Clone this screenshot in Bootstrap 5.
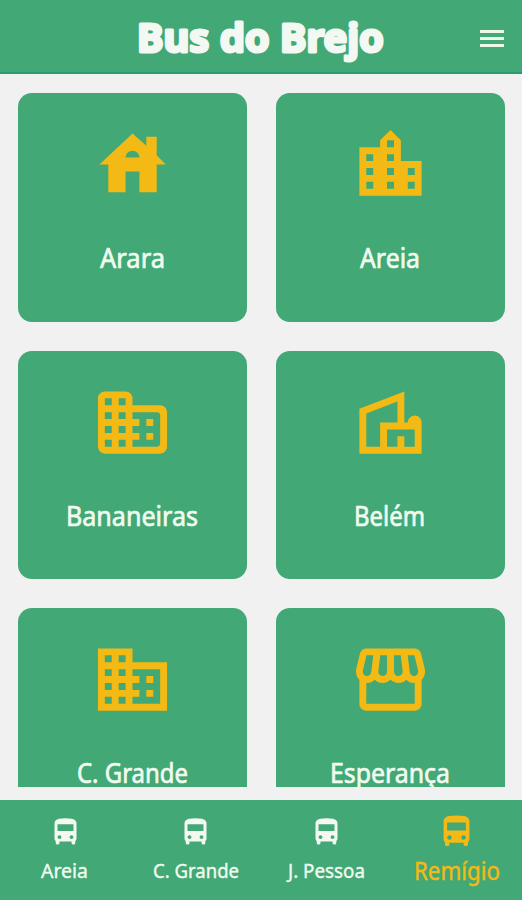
<!DOCTYPE html>
<html lang="pt-BR">
<head>
<meta charset="utf-8">
<meta name="viewport" content="width=device-width, initial-scale=1">
<title>Bus do Brejo</title>
<link href="https://cdn.jsdelivr.net/npm/bootstrap@5.3.0/dist/css/bootstrap.min.css" rel="stylesheet">
<style>
:root{--leaf:#41a876;--sun:#f3ba15;--paper:#f1f1f1}
body{background:var(--paper);font-family:"Noto Sans","Open Sans",sans-serif}
.app{height:900px}
.topbar{height:74px;background:var(--leaf);border-bottom:2px solid #2a9a6f;padding:5px 18px 0 42px}
.brand-title{font:700 40px/1 "Noto Sans",sans-serif}
.brand-title svg,.fit{display:block;overflow:visible}
.brand-title text{fill:#f4f8f3;stroke:#f4f8f3;stroke-width:3px;stroke-linejoin:round}
.menu-btn{width:24px;height:17px}
.menu-btn i{height:3px;background:#eef8e8}
.towns{height:713px;padding:19px 18px 0;overflow:hidden}
.town-grid{display:grid;grid-template-columns:229px 229px;column-gap:29px;row-gap:29px}
.town{height:228.5px;background:var(--leaf);border-radius:14px;padding-top:30px}
.town .pic{width:83px;height:83px;fill:var(--sun)}
.town .fit{height:40px;margin-top:31px;font-size:27px}
.fit text{fill:#f0fbee;stroke:#f0fbee;stroke-width:.7px;stroke-linejoin:round}
.dock{height:100px;margin-top:13px;background:var(--leaf)}
.stop{padding-top:18px}
.stop .fit{height:30px;margin-top:8px;font-size:20.5px}
.stop .fit text{stroke-width:.4px}
.stop .bus{width:23px;height:27px;fill:#f4f8f0}
.stop.current{padding-top:15px}
.stop.current .bus{width:27px;height:32px;fill:var(--sun)}
.stop.current .fit{font-size:24.5px;margin-top:7px}
.stop.current .fit text{fill:var(--sun);stroke:var(--sun)}
</style>
<script src="https://cdn.jsdelivr.net/npm/bootstrap@5.3.0/dist/js/bootstrap.bundle.min.js"></script>
</head>
<body>
<svg class="d-none"><symbol id="bus" viewBox="0 0 23 27"><path fill-rule="evenodd" d="M5 .8Q11.500 -.4 18 .8Q22.500 1.800 22.500 5.500V20.500Q22.500 22 21.300 23V25Q21.300 26.500 19.500 26.500T17.500 25V23.500H5.500V25Q5.500 26.500 3.600 26.500T1.700 25V23Q.5 22 .5 20.500V5.500Q.5 1.800 5 .8ZM3.500 6.300V13H19.500V6.300ZM5.500 17.200a1.900 1.900 0 1 0 .01 0ZM17.500 17.200a1.900 1.900 0 1 0 .01 0Z"/></symbol></svg>
<div class="app d-flex flex-column">
<header class="topbar d-flex align-items-center flex-shrink-0">
<h1 class="brand-title flex-grow-1 d-flex justify-content-center m-0"><svg width="248" height="54"><text x="0" y="40" textLength="247" lengthAdjust="spacingAndGlyphs">Bus do Brejo</text></svg></h1>
<button class="menu-btn btn p-0 border-0 rounded-0 d-flex flex-column justify-content-between" aria-label="Menu"><i class="w-100"></i><i class="w-100"></i><i class="w-100"></i></button>
</header>
<main class="towns flex-shrink-0"><div class="town-grid">
<a class="town d-flex flex-column align-items-center"><svg class="pic" viewBox="0 0 24 24"><path d="M19 9.300V4h-3v2.600L12 3 2.450 12H5v8h5v-6h4v6h5v-8h2.600ZM10 10c0-1.100.9-2 2-2s2 .9 2 2Z"/></svg><svg class="fit" width="66"><text y="31" textLength="65" lengthAdjust="spacingAndGlyphs">Arara</text></svg></a>
<a class="town d-flex flex-column align-items-center"><svg class="pic" viewBox="0 0 24 24"><path d="M15 11V5l-3-3-3 3v2H3v14h18V11ZM7 19H5v-2h2Zm0-4H5v-2h2Zm0-4H5V9h2Zm6 8h-2v-2h2Zm0-4h-2v-2h2Zm0-4h-2V9h2Zm0-4h-2V5h2Zm6 12h-2v-2h2Zm0-4h-2v-2h2Z"/></svg><svg class="fit" width="62"><text y="31" textLength="60" lengthAdjust="spacingAndGlyphs">Areia</text></svg></a>
<a class="town d-flex flex-column align-items-center"><svg class="pic" viewBox="0 0 24 24"><path fill-rule="evenodd" d="M12 7V5a2 2 0 0 0-2-2H4a2 2 0 0 0-2 2v14a2 2 0 0 0 2 2h16a2 2 0 0 0 2-2V9a2 2 0 0 0-2-2ZM6 19H4v-2h2Zm0-4H4v-2h2Zm0-4H4V9h2Zm0-4H4V5h2Zm4 12H8v-2h2Zm0-4H8v-2h2Zm0-4H8V9h2Zm0-4H8V5h2Zm9 12h-7v-2h2v-2h-2v-2h2v-2h-2V9h7a1 1 0 0 1 1 1v8a1 1 0 0 1-1 1Z"/><path d="M16 11h2v2h-2ZM16 15h2v2h-2Z"/></svg><svg class="fit" width="134"><text y="31" textLength="132" lengthAdjust="spacingAndGlyphs">Bananeiras</text></svg></a>
<a class="town d-flex flex-column align-items-center"><svg class="pic" viewBox="0 0 24 24"><path fill-rule="evenodd" d="M19 10a2 2 0 0 0-2 2h-1V3L3 8v13h18v-9a2 2 0 0 0-2-2ZM5 9.370l9-3.460V12H9v7H5ZM19 19h-3v-3h-2v3h-3v-5h8Z"/></svg><svg class="fit" width="73"><text y="31" textLength="71" lengthAdjust="spacingAndGlyphs">Belém</text></svg></a>
<a class="town d-flex flex-column align-items-center"><svg class="pic" viewBox="0 0 24 24"><path fill-rule="evenodd" d="M12 7V3H2v18h20V7ZM6 19H4v-2h2Zm0-4H4v-2h2Zm0-4H4V9h2Zm0-4H4V5h2Zm4 12H8v-2h2Zm0-4H8v-2h2Zm0-4H8V9h2Zm0-4H8V5h2Zm10 12h-8v-2h2v-2h-2v-2h2v-2h-2V9h8Z"/><path d="M16 11h2v2h-2ZM16 15h2v2h-2Z"/></svg><svg class="fit" width="112"><text y="31" textLength="111" lengthAdjust="spacingAndGlyphs">C. Grande</text></svg></a>
<a class="town d-flex flex-column align-items-center"><svg class="pic" viewBox="0 0 24 24"><path d="M21.900 8.890l-1.050-4.370c-.22-.9-1-1.520-1.910-1.520H5.050c-.9 0-1.690.63-1.900 1.520L2.100 8.890c-.24 1.020-.02 2.060.62 2.880.08.11.19.19.28.29V19c0 1.100.9 2 2 2h14c1.100 0 2-.9 2-2v-6.940c.09-.09.2-.18.28-.28.64-.82.87-1.870.62-2.890zm-2.990-3.900l1.050 4.370c.1.42.01.84-.25 1.170-.14.18-.44.47-.94.47-.61 0-1.140-.49-1.210-1.140L16.980 5l1.930-.01zM13 5h1.960l.54 4.520c.05.39-.07.78-.33 1.070-.22.26-.54.41-.95.41-.67 0-1.220-.59-1.220-1.310V5zM8.490 9.520L9.040 5H11v4.690c0 .72-.55 1.310-1.290 1.310-.34 0-.65-.15-.89-.41-.25-.29-.37-.68-.33-1.070zm-4.450-.16L5.050 5h1.970l-.58 4.860c-.08.65-.6 1.140-1.210 1.140-.49 0-.8-.29-.93-.47-.27-.32-.36-.75-.26-1.170zM5 19v-6.030c.08.01.15.03.23.03.87 0 1.660-.36 2.240-.95.6.6 1.400.95 2.310.95.87 0 1.650-.36 2.230-.93.59.57 1.390.93 2.290.93.84 0 1.640-.35 2.240-.95.58.59 1.370.95 2.240.95.08 0 .15-.02.23-.03V19H5z"/></svg><svg class="fit" width="122"><text y="31" textLength="120" lengthAdjust="spacingAndGlyphs">Esperança</text></svg></a>
</div></main>
<nav class="dock d-flex flex-shrink-0">
<a class="stop col-3 d-flex flex-column align-items-center"><svg class="bus"><use href="#bus"/></svg><svg class="fit" width="48"><text y="25" textLength="47" lengthAdjust="spacingAndGlyphs">Areia</text></svg></a>
<a class="stop col-3 d-flex flex-column align-items-center"><svg class="bus"><use href="#bus"/></svg><svg class="fit" width="86"><text y="25" textLength="86" lengthAdjust="spacingAndGlyphs">C. Grande</text></svg></a>
<a class="stop col-3 d-flex flex-column align-items-center"><svg class="bus"><use href="#bus"/></svg><svg class="fit" width="77"><text y="25" textLength="77" lengthAdjust="spacingAndGlyphs">J. Pessoa</text></svg></a>
<a class="stop current col-3 d-flex flex-column align-items-center"><svg class="bus"><use href="#bus"/></svg><svg class="fit" width="86"><text y="26" textLength="86" lengthAdjust="spacingAndGlyphs">Remígio</text></svg></a>
</nav>
</div>
</body>
</html>
